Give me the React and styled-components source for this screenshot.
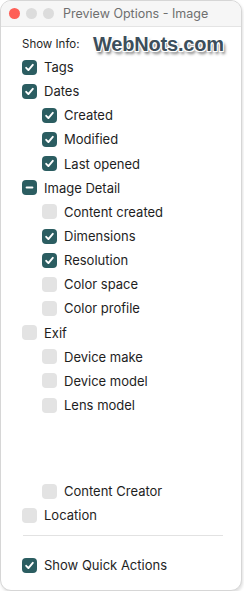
import React from 'react'
import styled, { createGlobalStyle } from 'styled-components'

const GlobalStyle = createGlobalStyle`
  html, body {
    margin: 0;
    padding: 0;
    background: #ffffff;
  }
  body {
    font-family: Inter, "Liberation Sans", sans-serif;
    -webkit-font-smoothing: antialiased;
  }
`

const Window = styled.div`
  position: relative;
  width: 242px;
  height: 591px;
  box-sizing: border-box;
  background: #fff;
  border: 1px solid #d6d6d6;
  border-radius: 11px;
  box-shadow: 1px 2px 3px rgba(0, 0, 0, 0.12);
  overflow: hidden;
  display: flex;
  flex-direction: column;
`

const TitleBar = styled.div`
  height: 26px;
  flex: none;
  display: flex;
  align-items: center;
  padding-left: 8px;
  background: #f6f6f6;
  border-bottom: 1px solid #e4e4e4;
  box-sizing: border-box;
`

const Light = styled.span`
  width: 11px;
  height: 11px;
  border-radius: 50%;
  margin-right: 6px;
  background: ${p => p.color};
`

const Title = styled.span`
  margin-left: 3px;
  font-size: 12.5px;
  color: #6f6f6f;
`

const Body = styled.div`
  padding: 10px 0 0 21px;
  display: flex;
  flex-direction: column;
`

const Label = styled.div`
  font-size: 11.5px;
  color: #262626;
  height: 14px;
  line-height: 14px;
  margin-bottom: 4px;
`

const Row = styled.div`
  height: 24.15px;
  display: flex;
  align-items: center;
  padding-left: ${p => (p.nested ? 20 : 0)}px;
  font-size: 13px;
  color: #1e1e1e;
`

const Box = styled.span`
  width: 15px;
  height: 15px;
  flex: none;
  border-radius: 4px;
  margin-right: 7px;
  display: flex;
  align-items: center;
  justify-content: center;
  background: ${p => (p.state === 'off' ? '#e3e3e3' : '#2b5d61')};
`

const Spacer = styled.div`
  height: ${p => p.h}px;
`

const Divider = styled.div`
  height: 1px;
  width: 200px;
  background: #e2e2e2;
  margin: 8px 0 17px 1px;
`

const Watermark = styled.div`
  position: absolute;
  left: 92px;
  top: 32px;
  font-family: "Liberation Sans", Arial, sans-serif;
  font-weight: 700;
  font-size: 20px;
  letter-spacing: -0.2px;
  color: #3c4e5b;
  text-shadow:
    -1px -1px 0 #fff, 1px -1px 0 #fff, -1px 1px 0 #fff, 1px 1px 0 #fff,
    2px 3px 3px rgba(0, 0, 0, 0.55);
`

const Check = ({ state }) => (
  <Box state={state}>
    {state === 'on' && (
      <svg width="11" height="11" viewBox="0 0 11 11">
        <path d="M2.2 5.8 L4.4 8.1 L8.8 2.8" fill="none" stroke="#fff" strokeWidth="1.9" strokeLinecap="round" strokeLinejoin="round" />
      </svg>
    )}
    {state === 'mixed' && (
      <svg width="11" height="11" viewBox="0 0 11 11">
        <path d="M2.6 5.5 H8.4" stroke="#fff" strokeWidth="2" strokeLinecap="round" />
      </svg>
    )}
  </Box>
)

const Option = ({ label, state = 'off', nested }) => (
  <Row nested={nested}>
    <Check state={state} />
    <span>{label}</span>
  </Row>
)

export default function App() {
  return (
    <>
      <GlobalStyle />
      <Window>
        <TitleBar>
          <Light color="#fe5f57" />
          <Light color="#dcdcdc" />
          <Light color="#dcdcdc" />
          <Title>Preview Options - Image</Title>
        </TitleBar>
        <Body>
          <Label>Show Info:</Label>
          <Option label="Tags" state="on" />
          <Option label="Dates" state="on" />
          <Option label="Created" state="on" nested />
          <Option label="Modified" state="on" nested />
          <Option label="Last opened" state="on" nested />
          <Option label="Image Detail" state="mixed" />
          <Option label="Content created" nested />
          <Option label="Dimensions" state="on" nested />
          <Option label="Resolution" state="on" nested />
          <Option label="Color space" nested />
          <Option label="Color profile" nested />
          <Option label="Exif" />
          <Option label="Device make" nested />
          <Option label="Device model" nested />
          <Option label="Lens model" nested />
          <Spacer h={62} />
          <Option label="Content Creator" nested />
          <Option label="Location" />
          <Divider />
          <Option label="Show Quick Actions" state="on" />
        </Body>
        <Watermark>WebNots.com</Watermark>
      </Window>
    </>
  )
}
